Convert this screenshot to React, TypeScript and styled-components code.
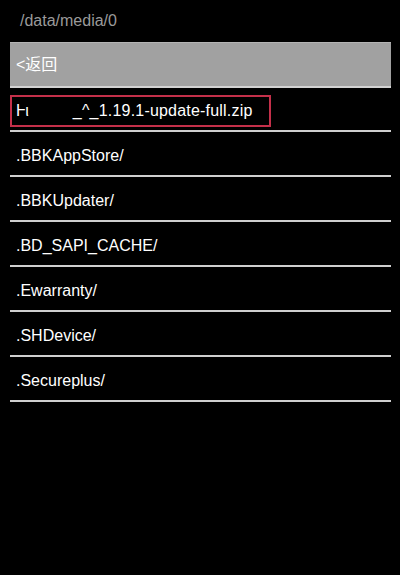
import styled, { createGlobalStyle } from 'styled-components';

const GlobalStyle = createGlobalStyle`
  html, body {
    margin: 0;
    padding: 0;
    background: #000;
  }
  body {
    font-family: "Liberation Sans", "Noto Sans CJK SC", Arial, sans-serif;
  }
`

const folders = [
  '.BBKAppStore/',
  '.BBKUpdater/',
  '.BD_SAPI_CACHE/',
  '.Ewarranty/',
  '.SHDevice/',
  '.Secureplus/',
]

const App = () => {
  return (
    <Screen>
      <GlobalStyle />
      <PathBar>/data/media/0</PathBar>
      <Browser>
        <BackButton>&lt;返回</BackButton>
        <FileRow $first>
          <Selected>
            <span>Ⱶι</span>
            <Hidden />
            <FileName>_^_1.19.1-update-full.zip</FileName>
          </Selected>
        </FileRow>
        {folders.map((name) => (
          <FileRow key={name}>{name}</FileRow>
        ))}
      </Browser>
    </Screen>
  )
}

export default App;

const Screen = styled.div`
  width: 400px;
  height: 575px;
  background: #000;
  color: #fff;
  font-size: 16px;
  overflow: hidden;
`
const PathBar = styled.div`
  height: 42px;
  line-height: 42px;
  padding-left: 20px;
  color: #9a9a9a;
`
const Browser = styled.div`
  display: flex;
  flex-direction: column;
  margin: 0 9px 0 10px;
`
const BackButton = styled.div`
  height: 46px;
  box-sizing: border-box;
  line-height: 44px;
  padding-left: 6px;
  background: #a1a1a1;
  border-top: 1px solid #b4b4b4;
  border-bottom: 2px solid #d2d2d2;
  color: #fff;
  font-family: "Liberation Sans", "Noto Sans CJK SC", sans-serif;
`
const FileRow = styled.div<{ $first?: boolean }>`
  box-sizing: border-box;
  height: ${(p) => (p.$first ? '44px' : '45px')};
  padding: ${(p) => (p.$first ? '7px 0 0 0' : '4px 0 0 6px')};
  line-height: 39px;
  border-bottom: 2px solid #cfcfcf;
  white-space: nowrap;
`
const Selected = styled.div`
  display: flex;
  align-items: center;
  box-sizing: border-box;
  width: 261px;
  height: 32px;
  line-height: 28px;
  padding-left: 4px;
  border: 2px solid #c4304a;
  font-family: "Liberation Sans", "DejaVu Sans", sans-serif;
`
const Hidden = styled.span`
  display: inline-block;
  width: 44px;
`
const FileName = styled.span`
  letter-spacing: 0.2px;
`
